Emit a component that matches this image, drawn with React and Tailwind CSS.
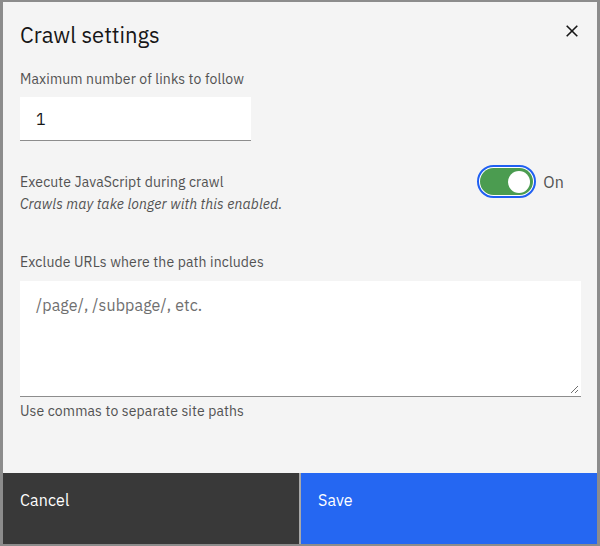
import React from 'react';

const font = { fontFamily: '"IBM Plex Sans", "Noto Sans", sans-serif' };

const CloseIcon = () => (
    <svg width="20" height="20" viewBox="0 0 20 20" fill="none" stroke="#161616" strokeWidth="1.6">
        <path d="M4.7 4.7 L15.3 15.3 M15.3 4.7 L4.7 15.3" />
    </svg>
);

const Toggle = () => (
    <div className="flex items-center gap-[7px]">
        <div className="rounded-full border-2 border-[#1f5ff2] bg-white p-[1px]">
            <div className="flex h-[27px] w-[53px] items-center justify-end rounded-full bg-[#4b9c50] pr-[3px]">
                <div className="h-[22px] w-[22px] rounded-full bg-white"></div>
            </div>
        </div>
        <span className="text-[16px] leading-[22px] text-[#525252]">On</span>
    </div>
);

export default function App() {
    return (
        <div className="h-[546px] w-[600px] overflow-hidden bg-[#8c8c8c] pl-[3px] pt-[2px] tracking-[0.12px]" style={font}>
            <div className="flex h-[542px] w-[594px] flex-col bg-[#f4f4f4]">
                {/* Header */}
                <div className="flex h-[47px] items-start justify-between pl-[17px] pr-[16px] pt-[19px]">
                    <h2 className="text-[22px] leading-[28px] tracking-normal text-[#161616]">Crawl settings</h2>
                    <button className="-mr-[1px] flex h-[20px] w-[20px] items-center justify-center">
                        <CloseIcon />
                    </button>
                </div>

                {/* Body */}
                <div className="flex flex-1 flex-col pl-[17px] pr-[16px]">
                    <label className="mt-[21px] text-[14px] leading-[18px] text-[#525252]">
                        Maximum number of links to follow
                    </label>
                    <div className="mt-[9px] flex h-[44px] w-[231px] items-center border-b border-[#8d8d8d] bg-white pl-4 text-[16px] text-[#161616]">
                        1
                    </div>

                    <div className="mt-[24px] flex items-start justify-between pr-[17px]">
                        <div className="flex flex-col gap-[4px] pt-[8px]">
                            <span className="text-[14px] leading-[18px] text-[#525252]">
                                Execute JavaScript during crawl
                            </span>
                            <span className="text-[14px] italic leading-[18px] text-[#525252]">
                                Crawls may take longer with this enabled.
                            </span>
                        </div>
                        <Toggle />
                    </div>

                    <label className="mt-[40px] text-[14px] leading-[18px] text-[#525252]">
                        Exclude URLs where the path includes
                    </label>
                    <div className="relative mt-[10px] h-[116px] w-full border-b border-[#8d8d8d] bg-white px-4 pt-[12px]">
                        <span className="text-[16px] leading-[22px] text-[#6f6f6f]">/page/, /subpage/, etc.</span>
                        <svg className="absolute bottom-[2px] right-[2px]" width="9" height="9" viewBox="0 0 9 9" stroke="#6f6f6f" strokeWidth="1">
                            <path d="M1 8 L8 1 M5 8 L8 5" />
                        </svg>
                    </div>
                    <span className="mt-[5px] text-[14px] leading-[18px] text-[#525252]">
                        Use commas to separate site paths
                    </span>
                </div>

                {/* Footer */}
                <div className="flex h-[71px] gap-[2px] bg-[#a8a8a8]">
                    <button className="flex flex-1 items-start self-stretch bg-[#393939] pl-[17px] pt-[18px] text-left text-[16px] leading-[18px] text-white">
                        Cancel
                    </button>
                    <button className="flex flex-1 items-start self-stretch bg-[#2567f2] pl-[17px] pt-[18px] text-left text-[16px] leading-[18px] text-white">
                        Save
                    </button>
                </div>
            </div>
        </div>
    );
}
